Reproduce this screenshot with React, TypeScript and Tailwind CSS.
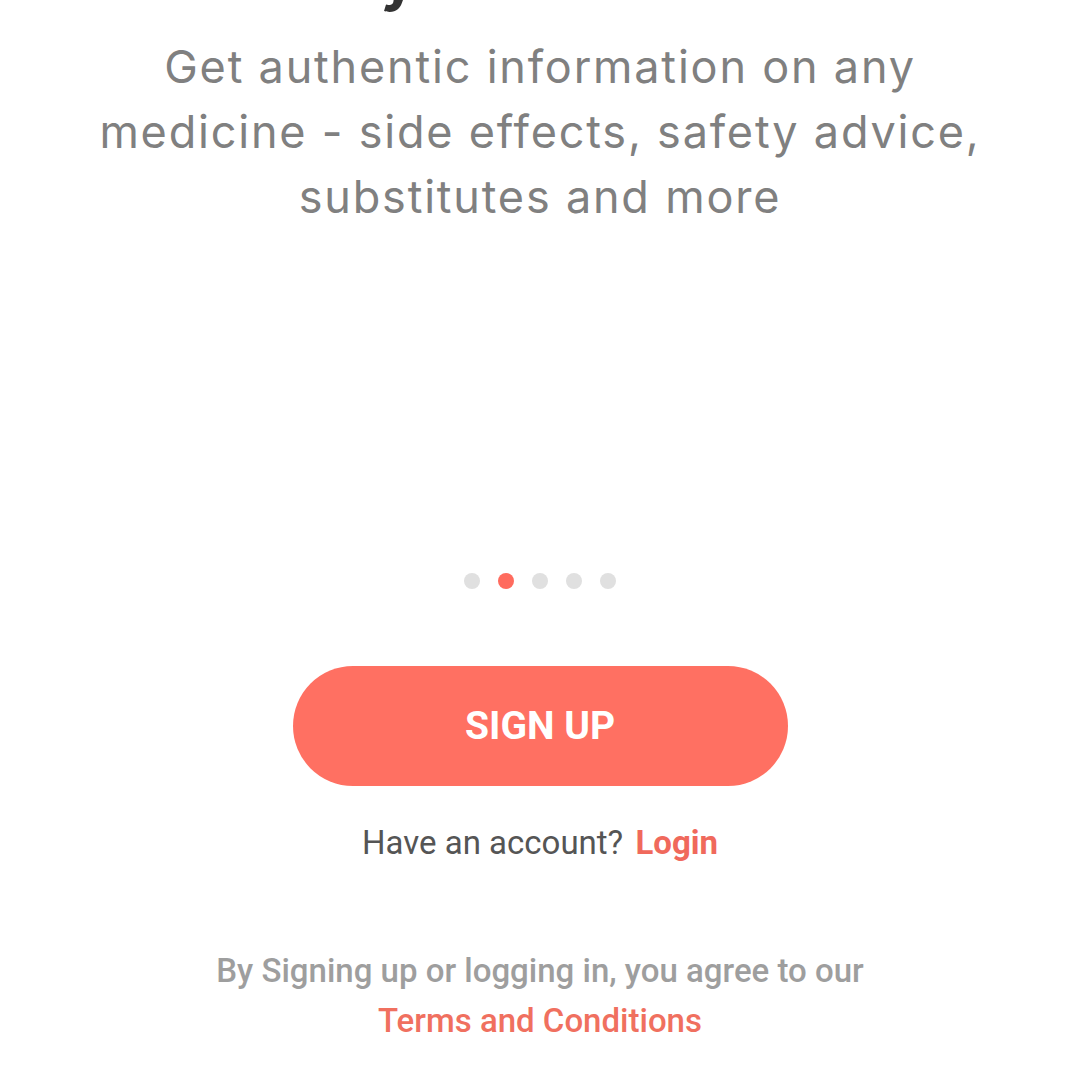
import React from "react";

function Dots({ active }: { active: number }) {
  return (
    <div className="flex items-center gap-[18px]">
      {[0, 1, 2, 3, 4].map((i) => (
        <span
          key={i}
          className={`block h-4 w-4 rounded-full ${i === active ? "bg-[#ff6b5e]" : "bg-[#e0e0e0]"}`}
        />
      ))}
    </div>
  );
}

export default function App() {
  return (
    <div className="flex h-[1080px] w-full flex-col items-center overflow-hidden bg-white">
      {/* title scrolled off the top, only a descender shows */}
      <h1 className="-mt-[58px] pr-[50px] text-center font-['Inter',sans-serif] text-[60px] font-bold leading-[70px] text-[#333333]">
        Know your medicines
      </h1>
      <p className="mt-[22px] text-center font-['Inter',sans-serif] text-[45px] leading-[65px] tracking-[1.8px] text-[#808080]">
        Get authentic information on any
        <br />
        medicine - side effects, safety advice,
        <br />
        substitutes and more
      </p>

      <div className="mt-[344px]">
        <Dots active={1} />
      </div>

      <button className="mt-[77px] flex h-[120px] w-[495px] items-center justify-center rounded-full bg-[#ff7062] font-['Roboto',sans-serif] text-[39px] font-bold text-white">
        SIGN UP
      </button>

      <div className="mt-[37px] font-['Roboto',sans-serif] text-[33px] leading-[40px] text-[#555555]">
        Have an account? <span className="ml-1 font-bold text-[#f0695c]">Login</span>
      </div>

      <div className="mt-[83px] text-center font-['Roboto',sans-serif] text-[33px] font-medium leading-[50px] text-[#9e9e9e]">
        <div>By Signing up or logging in, you agree to our</div>
        <div className="text-[#f0705f]">Terms and Conditions</div>
      </div>
    </div>
  );
}
